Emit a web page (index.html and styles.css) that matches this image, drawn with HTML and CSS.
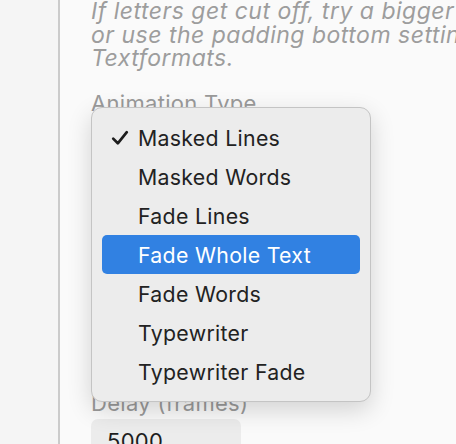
FILE: index.html
```html
<!DOCTYPE html>
<html>
<head>
<meta charset="utf-8">
<link rel="stylesheet" href="styles.css">
</head>
<body>
<div class="app">
  <aside class="sidebar"></aside>
  <main class="panel">
    <p class="hint">If letters get cut off, try a bigger font size<br>or use the padding bottom setting in the<br>Textformats.</p>
    <div class="field">
      <label class="label">Animation Type</label>
      <div class="select">Masked Lines</div>
    </div>
    <div class="field">
      <label class="label">Stagger (frames)</label>
      <div class="input">3</div>
    </div>
    <div class="field">
      <label class="label">Duration (frames)</label>
      <div class="input">30</div>
    </div>
    <div class="field">
      <label class="label">Delay (frames)</label>
      <div class="input">5000</div>
    </div>
    <ul class="menu">
      <li class="item checked"><span class="check"><svg width="18" height="16" viewBox="0 0 18 16"><path d="M2.2 8.6 L6.8 13.3 L15.8 2.2" fill="none" stroke="#1d1d1d" stroke-width="2.7" stroke-linecap="round" stroke-linejoin="round"/></svg></span>Masked Lines</li>
      <li class="item">Masked Words</li>
      <li class="item">Fade Lines</li>
      <li class="item active">Fade Whole Text</li>
      <li class="item">Fade Words</li>
      <li class="item">Typewriter</li>
      <li class="item">Typewriter Fade</li>
    </ul>
  </main>
</div>
</body>
</html>
```
FILE: styles.css
```css
html, body {
  margin: 0;
  padding: 0;
  height: 100%;
  overflow: hidden;
}
body {
  font-family: Inter, "Noto Sans", sans-serif;
  background: #fafafa;
}
.app {
  display: flex;
  height: 444px;
}
.sidebar {
  width: 58px;
  flex: none;
  background: #f5f5f5;
  border-right: 2px solid #cbcbcb;
}
.panel {
  position: relative;
  flex: 1;
  min-width: 0;
  padding: 0 0 0 31px;
  overflow: hidden;
}
.hint {
  margin: 0;
  white-space: nowrap;
  font-style: italic;
  font-size: 23px;
  line-height: 23.5px;
  color: #9d9d9d;
  letter-spacing: 0.5px;
}
.field {
  margin-top: 27px;
}
.hint + .field {
  margin-top: 19.5px;
}
.label {
  display: block;
  font-size: 22px;
  line-height: 26px;
  letter-spacing: 0.3px;
  color: #9a9a9a;
}
.select, .input {
  margin-top: 3px;
  width: 150px;
  height: 44px;
  background: #ececec;
  border-radius: 7px;
  font-size: 22px;
  line-height: 44px;
  padding-left: 16px;
  box-sizing: border-box;
  color: #1d1d1d;
  letter-spacing: 0.3px;
}
.select { width: 280px; }
.menu {
  position: absolute;
  left: 31px;
  top: 107px;
  width: 280px;
  margin: 0;
  padding: 10px;
  box-sizing: border-box;
  list-style: none;
  background: #ececec;
  border: 1px solid #c4c4c4;
  border-radius: 11px;
  box-shadow: 0 8px 24px rgba(0,0,0,0.16);
}
.item {
  position: relative;
  height: 39px;
  line-height: 41px;
  padding-left: 36px;
  border-radius: 5px;
  font-size: 21.3px;
  color: #222;
  letter-spacing: 0.3px;
  white-space: nowrap;
}
.item.active {
  background: #3181e2;
  color: #fff;
}
.check {
  position: absolute;
  left: 9px;
  top: 12px;
  line-height: 0;
}
```
